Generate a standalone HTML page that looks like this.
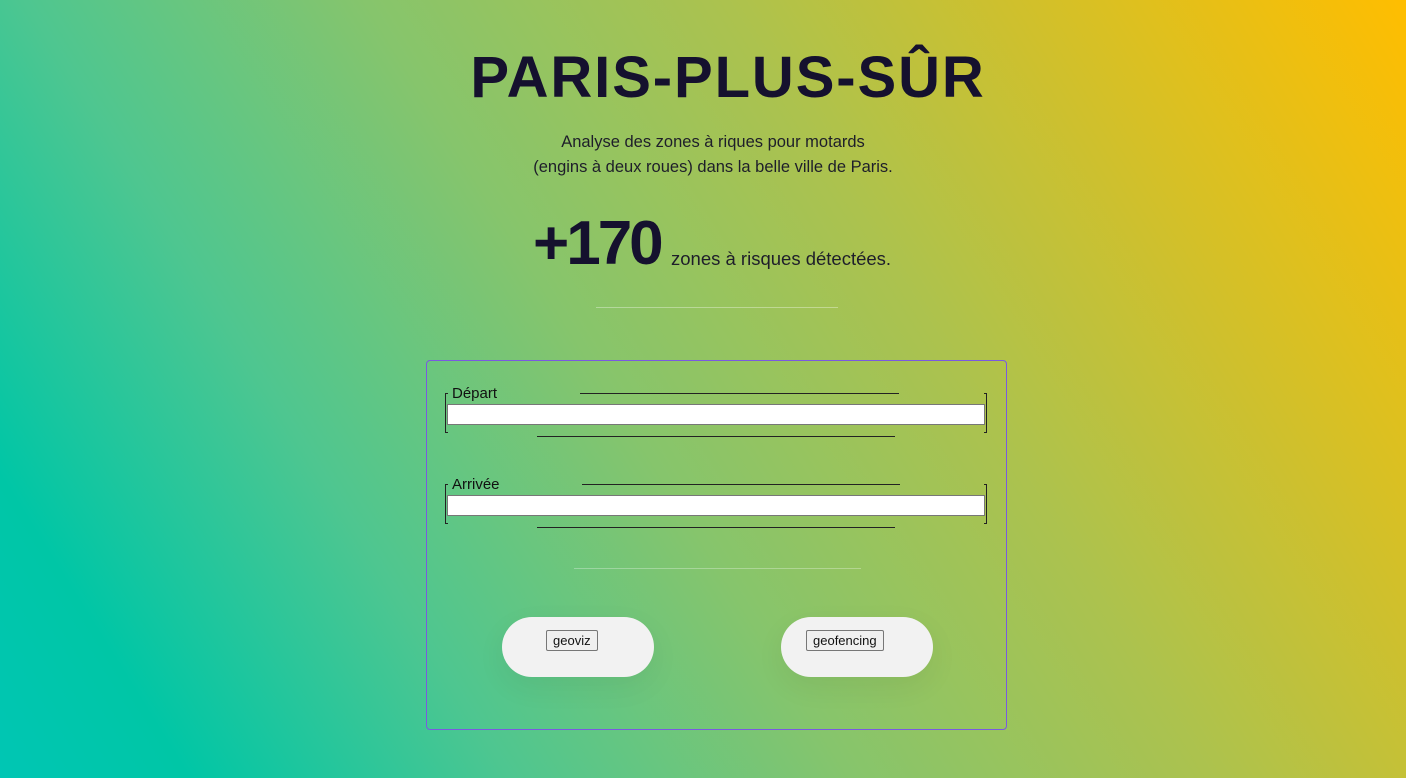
<!DOCTYPE html>
<html><head><meta charset="utf-8"><style>
*{margin:0;padding:0;box-sizing:border-box}
html,body{width:1406px;height:778px;overflow:hidden}
body{background:linear-gradient(58deg,#00c6b4 0%,#00c6a6 10%,#4ec690 27%,#86c56c 45%,#acc24e 64%,#d6c026 82%,#ffbe00 100%);font-family:"Liberation Sans",sans-serif;position:relative;color:#111}
.a{position:absolute}
h1{position:absolute;left:0;width:1406px;top:44px;text-align:center;font-size:58px;font-weight:bold;color:#15112e;letter-spacing:1.9px;padding-left:50px}
.sub{left:0;width:1406px;top:130px;text-align:center;font-size:16.5px;line-height:25px;color:#1e1e2a;padding-left:20px}
.big{top:208px;left:533px;font-size:62px;font-weight:bold;color:#15112e;letter-spacing:-3px}
.zt{top:248px;left:671px;font-size:18.5px;color:#1e1e2a}
.ln{height:1px;background:#222}
.inp{background:#fff;border:1px solid #777;height:21px;width:538px;left:447px}
.pill{background:#f2f2f2;border-radius:30px;width:152px;height:60px;top:617px;box-shadow:0 10px 30px rgba(0,0,0,0.06)}
.btn{border:1px solid #777;background:#f0f0f0;font-size:13px;height:21px;line-height:19px;padding:0 6px;top:630px;border-radius:2px}
</style></head><body>
<h1>PARIS-PLUS-SÛR</h1>
<div class="a sub">Analyse des zones à riques pour motards<br>(engins à deux roues) dans la belle ville de Paris.</div>
<div class="a big">+170</div>
<div class="a zt">zones à risques détectées.</div>
<div class="a" style="left:596px;top:307px;width:242px;height:1px;background:rgba(255,255,255,0.35)"></div>
<div class="a" style="left:426px;top:360px;width:581px;height:370px;border:1px solid #7a5ae0;border-radius:4px"></div>

<div class="a" style="left:445px;top:393px;width:3px;height:40px;border:1px solid #222;border-right:none"></div>
<div class="a" style="left:984px;top:393px;width:3px;height:40px;border:1px solid #222;border-left:none"></div>
<div class="a" style="left:452px;top:385px;font-size:15px">Départ</div>
<div class="a ln" style="left:580px;top:393px;width:319px"></div>
<div class="a inp" style="top:404px"></div>
<div class="a ln" style="left:537px;top:436px;width:358px"></div>

<div class="a" style="left:445px;top:484px;width:3px;height:40px;border:1px solid #222;border-right:none"></div>
<div class="a" style="left:984px;top:484px;width:3px;height:40px;border:1px solid #222;border-left:none"></div>
<div class="a" style="left:452px;top:476px;font-size:15px">Arrivée</div>
<div class="a ln" style="left:582px;top:484px;width:318px"></div>
<div class="a inp" style="top:495px"></div>
<div class="a ln" style="left:537px;top:527px;width:358px"></div>

<div class="a" style="left:574px;top:568px;width:287px;height:1px;background:rgba(255,255,255,0.3)"></div>

<div class="a pill" style="left:502px"></div>
<div class="a btn" style="left:546px">geoviz</div>
<div class="a pill" style="left:781px"></div>
<div class="a btn" style="left:806px">geofencing</div>
</body></html>
